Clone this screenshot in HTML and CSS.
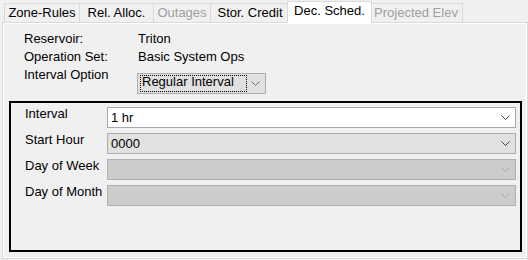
FILE: index.html
```html
<!DOCTYPE html>
<html lang="en">
<head>
  <meta charset="UTF-8">
  <title>Dec. Sched.</title>
  <link rel="stylesheet" href="styles.css">
</head>
<body>
  <div class="window">
    <div class="tabs">
      <div class="tab tab-zone">Zone-Rules</div>
      <div class="tab tab-rel">Rel. Alloc.</div>
      <div class="tab tab-outages disabled">Outages</div>
      <div class="tab tab-stor">Stor. Credit</div>
      <div class="tab tab-dec active">Dec. Sched.</div>
      <div class="tab tab-proj disabled">Projected Elev</div>
    </div>

    <div class="page">
      <div class="info">
        <span class="info-label">Reservoir:</span>
        <span>Triton</span>
        <span class="info-label">Operation Set:</span>
        <span>Basic System Ops</span>
        <span class="info-label">Interval Option</span>
        <div class="combo combo-option">
          <span class="focus">Regular Interval</span>
          <svg class="arrow" width="9" height="5" viewBox="0 0 9 5"><polyline points="0.5,0.5 4.5,4.5 8.5,0.5"/></svg>
        </div>
      </div>

      <div class="schedule">
        <span class="field-label">Interval</span>
        <div class="combo combo-edit">
          <span>1 hr</span>
          <svg class="arrow" width="9" height="5" viewBox="0 0 9 5"><polyline points="0.5,0.5 4.5,4.5 8.5,0.5"/></svg>
        </div>
        <span class="field-label">Start Hour</span>
        <div class="combo">
          <span>0000</span>
          <svg class="arrow" width="9" height="5" viewBox="0 0 9 5"><polyline points="0.5,0.5 4.5,4.5 8.5,0.5"/></svg>
        </div>
        <span class="field-label">Day of Week</span>
        <div class="combo combo-off">
          <span></span>
          <svg class="arrow" width="9" height="5" viewBox="0 0 9 5"><polyline points="0.5,0.5 4.5,4.5 8.5,0.5"/></svg>
        </div>
        <span class="field-label">Day of Month</span>
        <div class="combo combo-off">
          <span></span>
          <svg class="arrow" width="9" height="5" viewBox="0 0 9 5"><polyline points="0.5,0.5 4.5,4.5 8.5,0.5"/></svg>
        </div>
      </div>
    </div>
  </div>
</body>
</html>
```

FILE: styles.css
```css
body{
  margin: 0;
  background-color: #f0f0f0;
  font-family: "Liberation Sans", Arial, sans-serif;
  font-size: 13px;
  color: #000;
}
.window{
  padding-left: 2px;
}

/* tab strip */
.tabs{
  display: flex;
  align-items: flex-end;
  height: 22px;
  padding-left: 2px;
}
.tab{
  box-sizing: border-box;
  height: 19px;
  margin-left: -1px;
  border: 1px solid #d9d9d9;
  border-bottom: none;
  background-color: #f0f0f0;
  line-height: 18px;
  text-align: center;
  white-space: nowrap;
}
.tab:first-child{
  margin-left: 0;
}
.tab.disabled{
  color: #a0a0a0;
}
.tab.active{
  position: relative;
  z-index: 1;
  height: 22px;
  margin: 0 -2px -1px -3px;
  background-color: #fff;
  line-height: 17px;
}
.tab-zone{ width: 76px; }
.tab-rel{ width: 75px; }
.tab-outages{ width: 58px; }
.tab-stor{ width: 80px; }
.tab-dec{ width: 85px; }
.tab-proj{ width: 94px; }

/* tab page */
.page{
  box-sizing: border-box;
  width: 526px;
  height: 237px;
  border: 1px solid #d9d9d9;
  box-shadow: inset 0 0 0 1px #fff;
}
.info{
  display: grid;
  grid-template-columns: 114px 1fr;
  line-height: 18px;
  padding: 7px 0 0 21px;
}
.info .info-label:nth-last-child(2){
  align-self: start;
}

/* combo boxes */
.combo{
  box-sizing: border-box;
  display: flex;
  align-items: center;
  justify-content: space-between;
  height: 21px;
  padding: 0 5px 0 3px;
  border: 1px solid #adadad;
  background-color: #e1e1e1;
  line-height: 15px;
}
.arrow{
  display: block;
  fill: none;
  stroke: #404040;
  stroke-width: 1;
}
.combo-option{
  width: 129px;
  margin: 7px 0 0 -1px;
  padding-left: 2px;
}
.combo-option .arrow{
  stroke: #6e6e6e;
}
.focus{
  box-sizing: border-box;
  display: block;
  width: 107px;
  height: 17px;
  padding-left: 1px;
  border: 1px dotted #000;
  line-height: 12px;
}
.combo-edit{
  background-color: #fff;
  border-color: #a9a9b3;
}
.combo-off{
  background-color: #cccccc;
  border-color: #b0b0b0;
}
.combo-off .arrow{
  stroke: #a8a8a8;
}

/* schedule box */
.schedule{
  box-sizing: border-box;
  display: grid;
  grid-template-columns: 82px 1fr;
  grid-auto-rows: 21px;
  row-gap: 5px;
  align-content: start;
  height: 151px;
  margin: 7px 5px 0 6px;
  padding: 4px 4px 0 14px;
  border: 2px solid #000;
}
.field-label{
  line-height: 14px;
  white-space: nowrap;
}
```
